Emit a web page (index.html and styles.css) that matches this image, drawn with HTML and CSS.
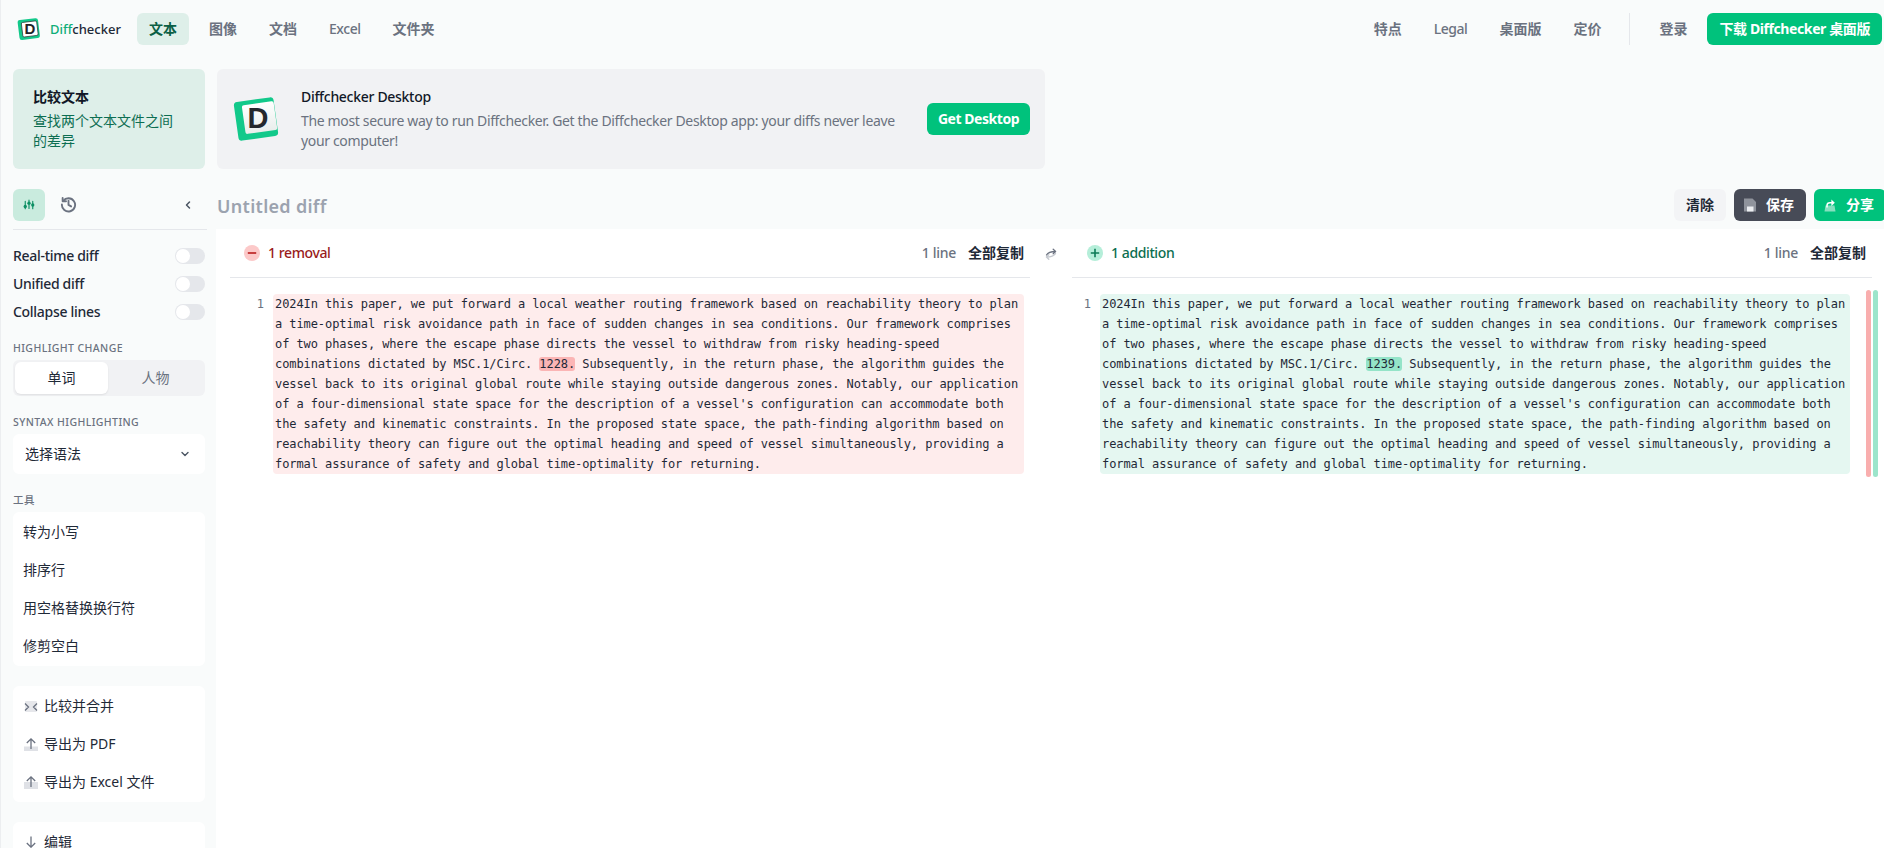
FILE: index.html
```html
<!DOCTYPE html>
<html lang="zh">
<head>
<meta charset="utf-8">
<title>Diffchecker</title>
<link rel="stylesheet" href="styles.css">
</head>
<body>
<div class="app">
  <header class="topbar">
    <a class="brand">
      <svg class="brand-mark" viewBox="0 0 24 24" width="24" height="24"><rect x="1.5" y="2" width="20.5" height="20" rx="2.5" transform="rotate(-7 12 12)" fill="#12c98a"/><rect x="5" y="4.6" width="15.4" height="14.6" rx="1.4" fill="#fff" stroke="#2a2e33" stroke-width="0.7" transform="rotate(-7 13 11.5)"/><text x="12.8" y="17" class="brand-d">D</text></svg>
      <span class="brand-name"><span class="brand-green">Diff</span>checker</span>
    </a>
    <nav class="nav">
      <a class="nav-item active">文本</a>
      <a class="nav-item">图像</a>
      <a class="nav-item">文档</a>
      <a class="nav-item nav-latin">Excel</a>
      <a class="nav-item">文件夹</a>
    </nav>
    <nav class="nav nav-right">
      <a class="nav-item">特点</a>
      <a class="nav-item nav-latin">Legal</a>
      <a class="nav-item">桌面版</a>
      <a class="nav-item">定价</a>
      <span class="nav-divider"></span>
      <a class="nav-item">登录</a>
      <a class="btn btn-green btn-download">下载 Diffchecker 桌面版</a>
    </nav>
  </header>

  <section class="hero">
    <div class="hero-card">
      <div class="hero-title">比较文本</div>
      <div class="hero-sub">查找两个文本文件之间的差异</div>
    </div>
    <div class="promo">
      <svg class="promo-logo" viewBox="0 0 46 46" width="46" height="46">
        <defs><linearGradient id="pg" x1="0" y1="0" x2="0" y2="1"><stop offset="0" stop-color="#ffffff"/><stop offset="1" stop-color="#e9eeec"/></linearGradient></defs>
        <rect x="3" y="3.5" width="40" height="39" rx="3.5" fill="#12c98a" transform="rotate(-8 23 23)"/>
        <rect x="10.5" y="7" width="32" height="29" rx="2" fill="url(#pg)" transform="rotate(-8 27 21)"/>
        <text x="25" y="32" class="promo-d">D</text>
      </svg>
      <div class="promo-text">
        <div class="promo-title">Diffchecker Desktop</div>
        <div class="promo-desc">The most secure way to run Diffchecker. Get the Diffchecker Desktop app: your diffs never leave your computer!</div>
      </div>
      <a class="btn btn-green promo-btn">Get Desktop</a>
    </div>
  </section>

  <div class="workspace">
    <aside class="sidebar">
      <div class="side-tabs">
        <span class="tab-btn">
          <svg viewBox="0 0 16 16" width="12" height="12" fill="none" stroke="#0c8f63" stroke-width="1.5" stroke-linecap="round"><path d="M3 3v10M8 1.5v11M13 3v10"/><circle cx="3" cy="10" r="2.2" fill="#0c8f63" stroke="none"/><circle cx="8" cy="5.5" r="2.2" fill="#0c8f63" stroke="none"/><circle cx="13" cy="8" r="2.2" fill="#0c8f63" stroke="none"/></svg>
        </span>
        <span class="tab-icon">
          <svg viewBox="0 0 18 18" width="17" height="17" fill="none" stroke="#6b7280" stroke-width="2" stroke-linecap="round" stroke-linejoin="round"><path d="M3.4 5.2A7 7 0 1 1 2 9"/><path d="M2.8 2v3.6h3.6"/><path d="M9 5v4.4l2.8 1.6"/></svg>
        </span>
        <span class="collapse">
          <svg viewBox="0 0 10 10" width="10" height="10" fill="none" stroke="#4b5563" stroke-width="1.5" stroke-linecap="round" stroke-linejoin="round"><path d="M6.5 2 3.5 5l3 3"/></svg>
        </span>
      </div>
      <div class="toggle-list">
        <label class="toggle-row">Real-time diff<span class="switch"></span></label>
        <label class="toggle-row">Unified diff<span class="switch"></span></label>
        <label class="toggle-row">Collapse lines<span class="switch"></span></label>
      </div>
      <div class="side-label label-highlight">HIGHLIGHT CHANGE</div>
      <div class="segment">
        <span class="seg-item seg-on">单词</span>
        <span class="seg-item">人物</span>
      </div>
      <div class="side-label label-syntax">SYNTAX HIGHLIGHTING</div>
      <div class="select">选择语法
        <svg viewBox="0 0 10 10" width="10" height="10" fill="none" stroke="#4b5563" stroke-width="1.4" stroke-linecap="round" stroke-linejoin="round"><path d="M2 3.5 5 6.5l3-3"/></svg>
      </div>
      <div class="side-label label-tools">工具</div>
      <ul class="tool-card">
        <li class="tool">转为小写</li>
        <li class="tool">排序行</li>
        <li class="tool">用空格替换换行符</li>
        <li class="tool">修剪空白</li>
      </ul>
      <ul class="tool-card">
        <li class="tool tool-icon"><svg viewBox="0 0 14 14" width="14" height="14"><rect width="12" height="11" x="1" y="2" fill="#e6e7eb" rx="1"/><path d="M1 4.5 4.5 8 1 11.5M13 4.5 9.5 8l3.5 3.5" fill="none" stroke="#6b7280" stroke-width="1.3"/></svg>比较并合并</li>
        <li class="tool tool-icon"><svg viewBox="0 0 14 14" width="14" height="14"><rect y="9.5" width="14" height="4.5" fill="#dfe1e6"/><path d="M7 12V2M2.8 6 7 1.8 11.2 6" fill="none" stroke="#6b7280" stroke-width="1.3"/></svg>导出为 PDF</li>
        <li class="tool tool-icon"><svg viewBox="0 0 14 14" width="14" height="14"><rect y="7" width="14" height="7" fill="#dfe1e6"/><path d="M7 12V2M2.8 6 7 1.8 11.2 6" fill="none" stroke="#6b7280" stroke-width="1.3"/></svg>导出为 Excel 文件</li>
      </ul>
      <ul class="tool-card">
        <li class="tool tool-icon"><svg viewBox="0 0 14 14" width="14" height="14"><path d="M7 1.5v10.5M2.8 8 7 12.2 11.2 8" fill="none" stroke="#6b7280" stroke-width="1.3"/></svg>编辑</li>
      </ul>
    </aside>

    <main class="main">
      <div class="toolbar">
        <h1 class="diff-title">Untitled diff</h1>
        <div class="actions">
          <a class="btn btn-light">清除</a>
          <a class="btn btn-dark"><svg viewBox="0 0 14 14" width="14" height="14"><path d="M1 0.5h8.5L13 4v9.5H1z" fill="#8f939c"/><rect x="4" y="8.5" width="6.5" height="5" fill="#eceef1"/></svg>保存</a>
          <a class="btn btn-green btn-share"><svg viewBox="0 0 14 14" width="14" height="14"><path d="M2.5 7.5h9l1 6h-11z" fill="#86dfbf"/><path d="M4 9.5V7.5Q4 4.8 7 4.8H9" fill="none" stroke="#fff" stroke-width="1.5"/><path d="M8.4 1.6 11.8 4.8 8.4 8z" fill="#fff"/></svg>分享</a>
        </div>
      </div>
      <div class="diff">
        <section class="side side-left">
          <div class="side-head">
            <span class="count removal"><svg viewBox="0 0 16 16" width="16" height="16"><circle cx="8" cy="8" r="8" fill="#fcc9c9"/><path d="M3.8 8h8.4" stroke="#b91c1c" stroke-width="1.6"/></svg>1 removal</span>
            <span class="lines">1 line</span><a class="copy">全部复制</a>
          </div>
          <div class="side-body">
            <span class="gutter gutter-left">1</span>
            <pre class="code code-del">2024In this paper, we put forward a local weather routing framework based on reachability theory to plan
a time-optimal risk avoidance path in face of sudden changes in sea conditions. Our framework comprises
of two phases, where the escape phase directs the vessel to withdraw from risky heading-speed
combinations dictated by MSC.1/Circ. <span class="mark-del">1228.</span> Subsequently, in the return phase, the algorithm guides the
vessel back to its original global route while staying outside dangerous zones. Notably, our application
of a four-dimensional state space for the description of a vessel's configuration can accommodate both
the safety and kinematic constraints. In the proposed state space, the path-finding algorithm based on
reachability theory can figure out the optimal heading and speed of vessel simultaneously, providing a
formal assurance of safety and global time-optimality for returning.</pre>
          </div>
        </section>
        <div class="swap">
          <svg viewBox="0 0 14 14" width="14" height="14" fill="none" stroke-width="1.3" stroke-linecap="round" stroke-linejoin="round"><path d="M2.5 8Q4.5 4.5 11.5 4.5M9.2 2.2 11.6 4.5 9.2 6.8" stroke="#6b7280"/><path d="M11.5 6.5Q9.5 10 2.5 10M4.8 7.7 2.4 10 4.8 12.3" stroke="#c4c8cf"/></svg>
        </div>
        <section class="side side-right">
          <div class="side-head">
            <span class="count addition"><svg viewBox="0 0 16 16" width="16" height="16"><circle cx="8" cy="8" r="8" fill="#b5eed9"/><path d="M3.8 8h8.4M8 3.8v8.4" stroke="#0b7a56" stroke-width="1.6"/></svg>1 addition</span>
            <span class="lines">1 line</span><a class="copy">全部复制</a>
          </div>
          <div class="side-body">
            <span class="gutter gutter-right">1</span>
            <pre class="code code-add">2024In this paper, we put forward a local weather routing framework based on reachability theory to plan
a time-optimal risk avoidance path in face of sudden changes in sea conditions. Our framework comprises
of two phases, where the escape phase directs the vessel to withdraw from risky heading-speed
combinations dictated by MSC.1/Circ. <span class="mark-add">1239.</span> Subsequently, in the return phase, the algorithm guides the
vessel back to its original global route while staying outside dangerous zones. Notably, our application
of a four-dimensional state space for the description of a vessel's configuration can accommodate both
the safety and kinematic constraints. In the proposed state space, the path-finding algorithm based on
reachability theory can figure out the optimal heading and speed of vessel simultaneously, providing a
formal assurance of safety and global time-optimality for returning.</pre>
            <div class="minimap"><span class="map-del"></span><span class="map-add"></span></div>
          </div>
        </section>
      </div>
    </main>
  </div>
</div>
</body>
</html>
```

FILE: styles.css
```css
* { box-sizing: border-box; }
html, body { margin: 0; padding: 0; }
body {
  background: #f9fbfb;
  color: #1f2937;
  font-family: "Noto Sans", "Noto Sans CJK SC", sans-serif;
  font-size: 14px;
  line-height: 20px;
}
.app {
  width: 1884px;
  height: 848px;
  overflow: hidden;
  border-left: 1px solid #eceef0;
  display: flex;
  flex-direction: column;
}
ul { list-style: none; margin: 0; padding: 0; }

/* top bar */
.topbar { display: flex; align-items: center; padding: 13px 2px 0 16px; height: 45px; flex: none; }
.brand { display: flex; align-items: center; gap: 9px; width: 120px; }
.brand-mark { flex: none; }
.brand-d { font: 700 15px "Liberation Sans", sans-serif; fill: #1f2328; text-anchor: middle; }
.brand-name { font-size: 13px; font-weight: 500; color: #1f2937; }
.brand-green { color: #0fae78; }
.nav { display: flex; align-items: center; gap: 8px; }
.nav-right { margin-left: auto; }
.nav-item { padding: 6px 12px; border-radius: 6px; font-weight: 600; color: #6b7280; font-size: 14px; }
.nav-latin { font-weight: 500; letter-spacing: -0.45px; }
.nav-item.active { background: #deefe9; color: #0b5f45; font-weight: 700; }
.nav-divider { width: 1px; height: 32px; background: #e5e7eb; margin: 0 9px 0 8px; }
.btn { display: inline-flex; align-items: center; justify-content: center; height: 32px; padding: 0 12px; border-radius: 6px; font-weight: 700; font-size: 14px; white-space: nowrap; }
.btn-green { background: #00c27c; color: #fff; }
.btn-download { letter-spacing: -0.4px; }
.btn-dark { background: #474b57; color: #fff; gap: 9px; padding: 0 12px 0 9px; }
.btn-light { background: #f3f4f6; color: #1f2937; font-weight: 600; }

/* hero */
.hero { display: flex; gap: 12px; margin: 24px 0 0 12px; flex: none; }
.hero-card { width: 192px; height: 100px; background: #deefe9; border-radius: 6px; padding: 18px 20px; }
.hero-title { font-weight: 700; color: #111827; margin-bottom: 4px; }
.hero-sub { color: #0d6e52; }
.promo { width: 828px; height: 100px; background: #f1f2f4; border-radius: 6px; display: flex; align-items: center; padding: 0 15px 0 16px; }
.promo-logo { flex: none; margin-right: 22px; }
.promo-d { font: 700 29px "Liberation Sans", sans-serif; fill: #25282c; text-anchor: middle; }
.promo-text { flex: 1; }
.promo-title { font-weight: 500; color: #111827; margin-bottom: 4px; letter-spacing: -0.3px; }
.promo-desc { color: #6b7280; width: 610px; letter-spacing: -0.35px; }
.promo-btn { flex: none; width: 103px; padding: 0; letter-spacing: -0.45px; }

/* workspace */
.workspace { display: flex; margin: 20px 0 0 12px; flex: 1; min-height: 0; }
.sidebar { width: 192px; flex: none; }
.side-tabs { display: flex; align-items: center; height: 41px; padding-bottom: 9px; border-bottom: 1px solid #e5e7eb; width: 194px; }
.tab-btn { width: 32px; height: 32px; border-radius: 6px; background: #c9ebde; display: flex; align-items: center; justify-content: center; }
.tab-icon { margin-left: 15px; display: flex; }
.collapse { margin-left: auto; margin-right: 14px; display: flex; }
.toggle-list { margin-top: 12px; }
.toggle-row { display: flex; align-items: center; justify-content: space-between; height: 28px; font-weight: 500; color: #1f2937; letter-spacing: -0.3px; }
.switch { width: 30px; height: 16px; border-radius: 8px; background: #e5e7eb; position: relative; }
.switch::before { content: ""; position: absolute; left: 1px; top: 1px; width: 14px; height: 14px; border-radius: 50%; background: #fff; }
.side-label { font-size: 10.5px; line-height: 14px; letter-spacing: 0.4px; color: #6b7280; font-weight: 500; }
.label-highlight { margin-top: 15px; }
.segment { display: flex; height: 36px; margin-top: 5px; background: #f1f2f4; border-radius: 6px; padding: 2px; }
.seg-item { flex: 1; display: flex; align-items: center; justify-content: center; color: #6b7280; }
.seg-item:first-child { flex: none; width: 93px; }
.seg-on { background: #fff; border-radius: 6px; color: #1f2937; box-shadow: 0 1px 2px rgba(0,0,0,.08); }
.label-syntax { margin-top: 19px; }
.select { display: flex; align-items: center; justify-content: space-between; height: 40px; margin-top: 5px; background: #fff; border-radius: 6px; padding: 0 15px 0 12px; color: #1f2937; }
.label-tools { margin-top: 19px; }
.tool-card { background: #fff; border-radius: 6px; padding: 1px 0; margin-bottom: 20px; }
.label-tools + .tool-card { margin-top: 5px; }
.tool { height: 38px; display: flex; align-items: center; padding-left: 10px; color: #1f2937; }
.tool-icon { gap: 6px; padding-left: 11px; }
.tool-icon svg { flex: none; }

/* main */
.main { flex: 1; min-width: 0; margin-left: 11px; display: flex; flex-direction: column; }
.toolbar { display: flex; align-items: center; justify-content: space-between; height: 32px; margin-bottom: 8px; margin-right: -2px; flex: none; }
.diff-title { margin: 2px 0 0 1px; font-size: 18px; font-weight: 600; color: #9ca3af; letter-spacing: 0.3px; }
.actions { display: flex; gap: 8px; }
.btn-share { gap: 9px; padding: 0 12px 0 9px; }
.diff { flex: 1; background: #fff; display: flex; padding-left: 14px; }
.side { width: 800px; flex: none; }
.side-head { height: 49px; border-bottom: 1px solid #e5e7eb; display: flex; align-items: center; padding: 0 6px 0 14px; }
.count { display: flex; align-items: center; gap: 8px; font-weight: 500; margin-right: auto; letter-spacing: -0.4px; }
.removal { color: #991b1b; }
.addition { color: #0b6e4f; }
.side-right .side-head { padding-left: 15px; }
.lines { color: #6b7280; font-weight: 500; margin-right: 12px; letter-spacing: -0.3px; }
.copy { color: #1f2937; font-weight: 600; }
.swap { width: 42px; flex: none; height: 49px; display: flex; align-items: center; justify-content: center; }
.side-body { display: flex; padding-top: 16px; }
.gutter { font: 12px/20px "DejaVu Sans Mono", monospace; color: #6b7280; text-align: right; padding-right: 9px; flex: none; }
.gutter-left { width: 43px; }
.gutter-right { width: 28px; }
.code { margin: 0; flex: none; height: 180px; padding-left: 2px; border-radius: 4px; font: 12px/20px "DejaVu Sans Mono", monospace; letter-spacing: -0.08px; color: #1f2937; white-space: pre; }
.code-del { width: 751px; background: #feecec; }
.code-add { width: 750px; background: #e5f7f1; }
.mark-del { background: #fbb5b5; border-radius: 3px; }
.mark-add { background: #94e4c8; border-radius: 3px; }
.minimap { display: flex; gap: 2px; margin: -4px 0 0 16px; height: 187px; }
.minimap span { width: 5px; border-radius: 3px; }
.map-del { background: #f9aeae; }
.map-add { background: #9ce5cb; }
```
